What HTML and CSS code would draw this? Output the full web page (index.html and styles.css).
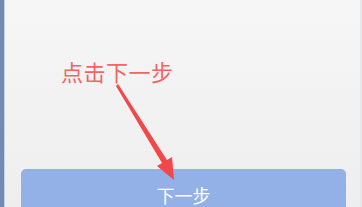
FILE: index.html
```html
<!DOCTYPE html>
<html>
<head>
<meta charset="utf-8">
<link rel="stylesheet" href="styles.css">
</head>
<body>
<div class="frame">
  <div class="edge"></div>
  <div class="panel">
    <div class="spacer">
      <div class="note">点击下一步</div>
      <svg class="arrow" width="362" height="207" viewBox="0 0 362 207">
        <path d="M116 86 L118 84 L167 160 L172 157 L174 180 L157 166 L162 163 Z" fill="#f2474b"/>
      </svg>
    </div>
    <div class="btn">下一步</div>
  </div>
  <div class="redge"></div>
</div>
</body>
</html>
```
FILE: styles.css
```css
html, body {
  margin: 0;
  padding: 0;
  width: 362px;
  height: 207px;
  overflow: hidden;
  font-family: "Noto Sans CJK SC", "Noto Sans", sans-serif;
}
.frame {
  display: flex;
  width: 362px;
  height: 207px;
  position: relative;
}
.edge {
  width: 4px;
  background: #7489b3;
  border-right: 1px solid #c9d2e2;
}
.redge {
  width: 2px;
  background: #e6e8ec;
}
.panel {
  flex: 1;
  display: flex;
  flex-direction: column;
  background: linear-gradient(#f6f6f6, #eeeeee);
}
.spacer {
  height: 169px;
  flex-shrink: 0;
  padding-top: 56px;
  box-sizing: border-box;
}
.note {
  margin-left: 56px;
  font-size: 22px;
  line-height: 30px;
  color: #f46366;
  letter-spacing: 0.5px;
}
.arrow {
  position: absolute;
  left: 0;
  top: 0;
  z-index: 2;
}
.btn {
  flex-shrink: 0;
  margin: 0 14px 0 16px;
  height: 38px;
  background: #93b1e6;
  border-radius: 5px 5px 0 0;
  color: #ffffff;
  font-size: 18px;
  text-align: center;
  padding-top: 13px;
  line-height: 26px;
  box-sizing: border-box;
  overflow: hidden;
}
```
